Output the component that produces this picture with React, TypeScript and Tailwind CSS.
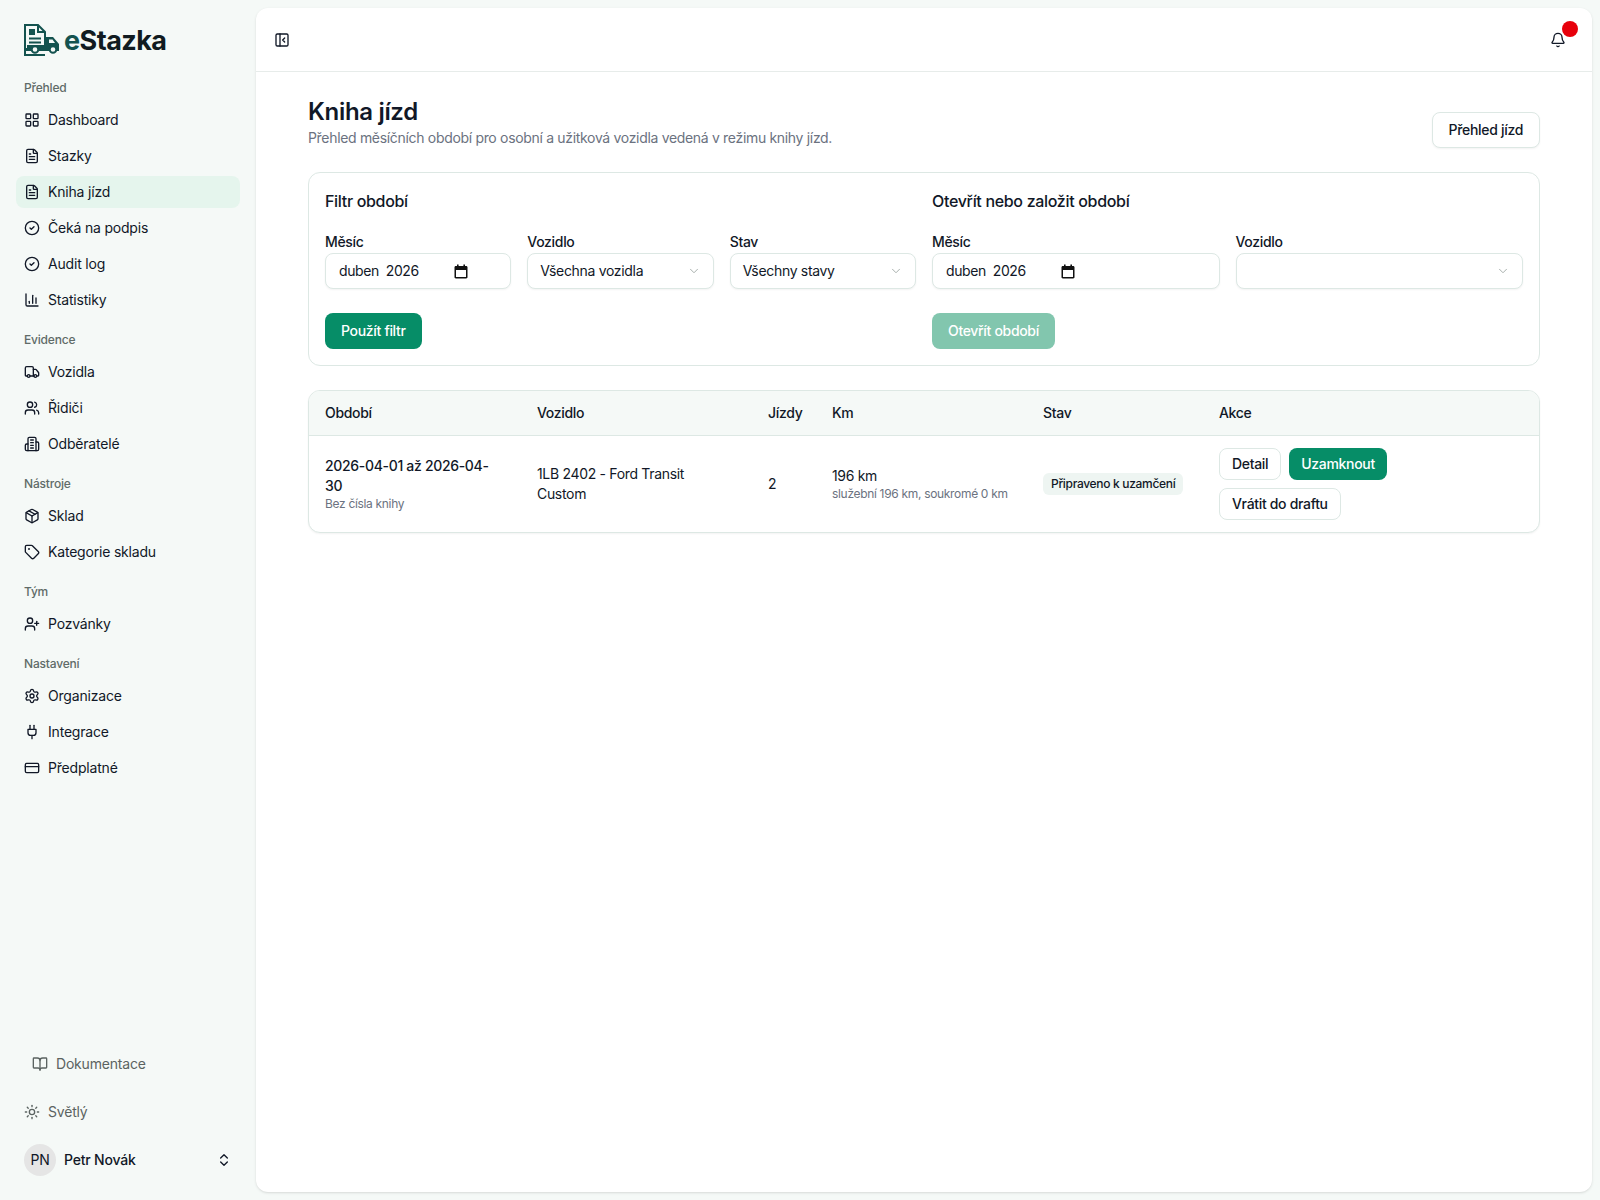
import React from "react";
import {
  LayoutGrid, FileText, CircleCheck, ChartColumn, Truck, Users, Package, Tag, UserPlus,
  Settings, CreditCard, BookOpen, Sun, ChevronsUpDown, Bell, PanelLeftClose, ChevronDown,
} from "lucide-react";

function IconBase({ size = 16, children, className }: { size?: number; children: React.ReactNode; className?: string }) {
  return (
    <svg width={size} height={size} viewBox="0 0 24 24" fill="none" stroke="currentColor" strokeWidth="2" strokeLinecap="round" strokeLinejoin="round" className={className}>
      {children}
    </svg>
  );
}

function BuildingIcon(props: any) {
  return (
    <IconBase {...props}>
      <path d="M6 22V4a2 2 0 0 1 2-2h8a2 2 0 0 1 2 2v18Z" />
      <path d="M6 12H4a2 2 0 0 0-2 2v6a2 2 0 0 0 2 2h2" />
      <path d="M18 9h2a2 2 0 0 1 2 2v9a2 2 0 0 1-2 2h-2" />
      <path d="M10 6h4M10 10h4M10 14h4M10 18h4" />
    </IconBase>
  );
}

function PlugIcon(props: any) {
  return (
    <IconBase {...props}>
      <path d="M12 22v-5" />
      <path d="M9 8V2" />
      <path d="M15 8V2" />
      <path d="M18 8v5a4 4 0 0 1-4 4h-4a4 4 0 0 1-4-4V8Z" />
    </IconBase>
  );
}

const groups = [
  { label: "Přehled", items: [
    { t: "Dashboard", I: LayoutGrid }, { t: "Stazky", I: FileText }, { t: "Kniha jízd", I: FileText, active: true },
    { t: "Čeká na podpis", I: CircleCheck }, { t: "Audit log", I: CircleCheck }, { t: "Statistiky", I: ChartColumn },
  ]},
  { label: "Evidence", items: [{ t: "Vozidla", I: Truck }, { t: "Řidiči", I: Users }, { t: "Odběratelé", I: BuildingIcon }] },
  { label: "Nástroje", items: [{ t: "Sklad", I: Package }, { t: "Kategorie skladu", I: Tag }] },
  { label: "Tým", items: [{ t: "Pozvánky", I: UserPlus }] },
  { label: "Nastavení", items: [{ t: "Organizace", I: Settings }, { t: "Integrace", I: PlugIcon }, { t: "Předplatné", I: CreditCard }] },
];

function Logo() {
  return (
    <svg width="36" height="32" viewBox="0 0 36 32" fill="none" className="shrink-0">
      <path d="M21 22V8L14 1H1V31H21" stroke="#14534f" strokeWidth="2" />
      <path d="M14 1V8H21" stroke="#14534f" strokeWidth="2" />
      <rect x="5" y="5" width="6" height="6" fill="#14534f" />
      <path d="M5 14.5H17M5 18.5H17" stroke="#14534f" strokeWidth="2" />
      <rect x="3" y="21" width="19" height="3" fill="#14534f" />
      <path d="M22 13H29L35 20V27H22Z" fill="#14534f" />
      <path d="M25 15.5H28.5L31 19H25Z" fill="#f5f9f7" />
      <rect x="2" y="24" width="33" height="3" fill="#14534f" />
      <circle cx="11" cy="25.5" r="3.3" fill="#f5f9f7" stroke="#14534f" strokeWidth="2" />
      <circle cx="29" cy="25.5" r="3.3" fill="#f5f9f7" stroke="#14534f" strokeWidth="2" />
    </svg>
  );
}

function CalendarGlyph() {
  return (
    <svg width="14" height="15" viewBox="0 0 14 15" className="shrink-0">
      <path d="M3 0.5h1.6V2h4.8V.5H11V2h1.2c.7 0 1.3.6 1.3 1.3v10c0 .7-.6 1.2-1.3 1.2H1.8c-.7 0-1.3-.5-1.3-1.2v-10C.5 2.6 1.1 2 1.8 2H3V.5ZM2 6v7h10V6H2Z" fill="#111" />
    </svg>
  );
}

function MonthField() {
  return (
    <div className="flex h-9 w-full items-center rounded-lg border border-[#dde8e4] bg-white pl-[13px] text-sm shadow-xs">
      <span className="whitespace-pre tracking-[-0.03em]">duben  2026</span>
      <span className="ml-[35px]"><CalendarGlyph /></span>
    </div>
  );
}

function SelectField({ text }: { text: string }) {
  return (
    <div className="flex h-9 w-full items-center justify-between rounded-lg border border-[#dde8e4] bg-white px-3 text-sm shadow-xs">
      <span>{text}</span>
      <ChevronDown size={14} strokeWidth={1.5} className="text-[#9aa3a0]" />
    </div>
  );
}

function Field({ label, children }: { label: string; children: React.ReactNode }) {
  return (
    <div className="flex min-w-0 flex-col gap-[2px]">
      <div className="flex h-[18px] items-center text-sm font-[450] leading-none">{label}</div>
      {children}
    </div>
  );
}

const th = "h-[44px] px-4 text-left text-sm font-[450] align-middle";
const td = "px-4 py-3 align-middle text-sm";

export default function App() {
  return (
    <div
      className="flex h-[1200px] w-[1600px] overflow-hidden bg-[#f5f9f7] text-[#111827] antialiased tracking-[-0.012em]"
      style={{ fontFamily: "Inter, 'Liberation Sans', sans-serif" }}
    >
      <aside className="flex w-[256px] shrink-0 flex-col">
        <div className="flex h-[68px] items-center gap-[4px] pl-6 pt-3">
          <Logo />
          <span className="text-[27px] font-bold leading-none tracking-[-0.02em]">
            <span className="text-[#14534f]">e</span><span className="text-[#111b21]">Stazka</span>
          </span>
        </div>
        {groups.map((g) => (
          <div key={g.label} className="px-4 py-1">
            <div className="flex h-8 items-center px-2 text-xs font-[450] text-[#5f6b68]">{g.label}</div>
            <div className="flex flex-col gap-1">
              {g.items.map(({ t, I, active }: any) => (
                <div key={t} className={`flex h-8 items-center gap-2 rounded-lg px-2 text-sm ${active ? "bg-[#e5f5ed]" : ""}`}>
                  <I size={16} className="shrink-0" />
                  <span>{t}</span>
                </div>
              ))}
            </div>
          </div>
        ))}
        <div className="mt-auto px-4 pb-6">
          <div className="flex h-8 items-center gap-2 px-4 text-sm text-[#5b6361]">
            <BookOpen size={16} className="shrink-0" /><span>Dokumentace</span>
          </div>
          <div className="mt-4 flex h-8 items-center gap-2 px-2 text-sm text-[#5b6361]">
            <Sun size={16} className="shrink-0" /><span>Světlý</span>
          </div>
          <div className="mt-4 flex h-8 items-center px-2">
            <div className="flex h-8 w-8 items-center justify-center rounded-full bg-[#e5e5e5] text-sm">PN</div>
            <span className="ml-2 text-sm font-[450]">Petr Novák</span>
            <ChevronsUpDown size={16} className="ml-auto" />
          </div>
        </div>
      </aside>

      <main className="my-2 mr-2 flex min-w-0 flex-1 flex-col rounded-xl bg-white tracking-[-0.02em] shadow-sm">
        <header className="flex h-[64px] items-center justify-between border-b border-[#e7ecea] pl-[18px] pr-[26px]">
          <PanelLeftClose size={16} />
          <div className="relative">
            <Bell size={16} />
            <span className="absolute -right-[12px] -top-[11px] h-4 w-4 rounded-full bg-[#e7000b]" />
          </div>
        </header>

        <div className="flex flex-col px-[52px]">
          <div className="flex items-start justify-between pt-6">
            <div>
              <h1 className="text-2xl font-semibold leading-8">Kniha jízd</h1>
              <p className="text-sm leading-5 text-[#6b7280]">Přehled měsíčních období pro osobní a užitková vozidla vedená v režimu knihy jízd.</p>
            </div>
            <button className="mt-4 h-9 rounded-lg border border-[#dde8e4] bg-white px-4 text-sm font-[450] shadow-xs">Přehled jízd</button>
          </div>

          <section className="mt-6 grid grid-cols-2 gap-4 rounded-xl border border-[#dde8e4] bg-white p-4">
            <div>
              <h2 className="flex h-6 items-center text-base font-[450]">Filtr období</h2>
              <div className="mt-5 grid grid-cols-3 gap-4">
                <Field label="Měsíc"><MonthField /></Field>
                <Field label="Vozidlo"><SelectField text="Všechna vozidla" /></Field>
                <Field label="Stav"><SelectField text="Všechny stavy" /></Field>
              </div>
              <button className="mt-6 h-9 rounded-lg bg-[#068d67] px-4 text-sm font-[450] text-white">Použít filtr</button>
            </div>
            <div>
              <h2 className="flex h-6 items-center text-base font-[450]">Otevřít nebo založit období</h2>
              <div className="mt-5 grid grid-cols-2 gap-4">
                <Field label="Měsíc"><MonthField /></Field>
                <Field label="Vozidlo"><SelectField text="" /></Field>
              </div>
              <button className="mt-6 h-9 rounded-lg bg-[#82c6ae] px-4 text-sm font-[450] text-white">Otevřít období</button>
            </div>
          </section>

          <div className="mt-6 overflow-hidden rounded-xl border border-[#dde8e4] bg-white shadow-xs">
            <table className="w-full table-fixed border-collapse">
              <colgroup>
                <col className="w-[212px]" /><col className="w-[231px]" /><col className="w-[64px]" />
                <col className="w-[211px]" /><col className="w-[176px]" /><col />
              </colgroup>
              <thead>
                <tr className="border-b border-[#dde8e4] bg-[#f5f9f7]">
                  <th className={th}>Období</th><th className={th}>Vozidlo</th><th className={th}>Jízdy</th>
                  <th className={th}>Km</th><th className={th}>Stav</th><th className={th}>Akce</th>
                </tr>
              </thead>
              <tbody>
                <tr>
                  <td className={td}>
                    <div className="font-[450] leading-5">2026-04-01 až 2026-04-30</div>
                    <div className="text-xs leading-4 text-[#6b7280]">Bez čísla knihy</div>
                  </td>
                  <td className={`${td} leading-5`}>1LB 2402 - Ford Transit Custom</td>
                  <td className={td}>2</td>
                  <td className={td}>
                    <div className="leading-5">196 km</div>
                    <div className="text-xs leading-4 text-[#6b7280]">služební 196 km, soukromé 0 km</div>
                  </td>
                  <td className={td}>
                    <span className="inline-block whitespace-nowrap rounded-md bg-[#eef5f2] px-2 py-[3px] text-xs font-[450] leading-4">Připraveno k uzamčení</span>
                  </td>
                  <td className={td}>
                    <div className="flex max-w-[200px] flex-wrap gap-2">
                      <button className="h-8 rounded-lg border border-[#dde8e4] px-3 text-sm font-[450]">Detail</button>
                      <button className="h-8 rounded-lg bg-[#068d67] px-3 text-sm font-[450] text-white">Uzamknout</button>
                      <button className="h-8 rounded-lg border border-[#dde8e4] px-3 text-sm font-[450]">Vrátit do draftu</button>
                    </div>
                  </td>
                </tr>
              </tbody>
            </table>
          </div>
        </div>
      </main>
    </div>
  );
}
